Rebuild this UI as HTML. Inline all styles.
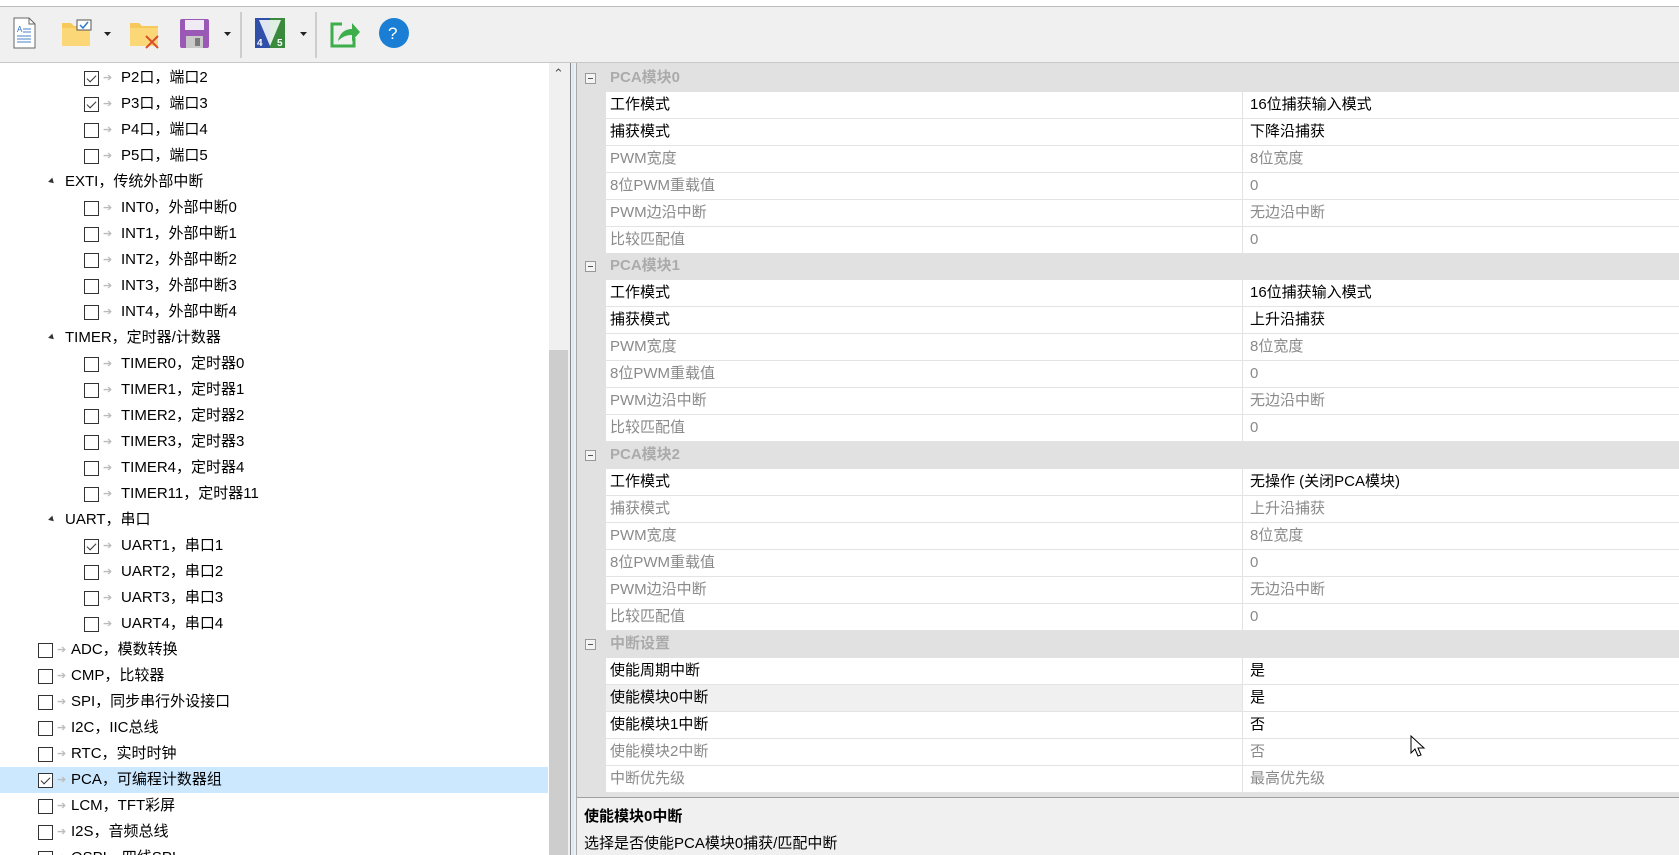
<!DOCTYPE html>
<html><head><meta charset="utf-8"><style>
*{margin:0;padding:0;box-sizing:border-box}
body{width:1679px;height:855px;overflow:hidden;background:#f0f0f0;font-family:"Liberation Sans","Noto Sans CJK SC",sans-serif;font-size:15px;color:#000;position:relative}
.a{position:absolute}
.tr{position:absolute;left:0;width:549px;height:26px;line-height:26px;white-space:nowrap}
.cb{position:absolute;top:6px;width:15px;height:15px;border:1px solid #333;background:#fff}
.cb.c::after{content:"";position:absolute;left:4px;top:1px;width:4px;height:8px;border:solid #333;border-width:0 1.5px 1.5px 0;transform:rotate(45deg)}
.ar{position:absolute;top:0;color:#bbb;font-size:11px}
.tri{position:absolute;top:10px;width:0;height:0;border-left:3px solid transparent;border-right:3px solid transparent;border-top:5px solid #333;transform:rotate(-45deg)}
.r{position:absolute;left:577px;width:1102px;height:27px;line-height:26px;white-space:nowrap}
.r .n{position:absolute;left:29px;width:636px;top:0;height:27px;background:#fff;border-bottom:1px solid #e3e3e3;padding-left:4px}
.r .v{position:absolute;left:665px;right:0;top:0;height:27px;background:#fff;border-bottom:1px solid #e3e3e3;border-left:1px solid #e3e3e3;padding-left:7px}
.r.g .n,.r.g .v{color:#8a8a8a}
.r.h{background:#e1e1e1;color:#ababab;font-weight:bold}
.r.h span{position:absolute;left:33px}
.r.h .bx{position:absolute;left:8px;top:8px;width:11px;height:11px;border:1px solid #999;background:#f4f4f4}
.r.h .bx::after{content:"";position:absolute;left:2px;top:4px;width:5px;height:1px;background:#555}
.r.s .n{background:#f0f0f0}
</style></head><body>
<div class="a" style="left:0;top:0;width:1679px;height:7px;background:#fff;border-bottom:1px solid #bbb"></div>
<div class="a" style="left:0;top:62px;width:1679px;height:1px;background:#c8c8c8"></div>
<!-- toolbar -->
<svg class="a" style="left:0;top:8px" width="440" height="54">
 <path d="M14 10h15l6 6v24H14z" fill="#fff" stroke="#666"/><path d="M29 10v6h6" fill="none" stroke="#666"/>
 <text x="17" y="24" font-size="8" fill="#2a6ec8" font-family="Liberation Sans">A</text>
 <path d="M23 21h8M23 24h8M17 28h14M17 31h14M17 34h14" stroke="#4a7fc8"/>
 <path d="M62 15h9l3 3h16v20H62z" fill="#f6c95a"/><path d="M62 20h28v18H62z" fill="#fbd777"/>
 <rect x="77" y="12" width="14" height="10" fill="#fff" stroke="#555"/><path d="M80 17l3 3 5-6" stroke="#2a7ad0" fill="none" stroke-width="1.5"/>
 <path d="M104 24h7l-3.5 4z" fill="#222"/>
 <path d="M130 15h9l3 3h16v20h-28z" fill="#f6c95a"/><path d="M130 20h28v18h-28z" fill="#fbd777"/>
 <path d="M146 28l12 12M158 28l-12 12" stroke="#d9512c" stroke-width="2"/>
 <rect x="180" y="11" width="29" height="29" rx="2" fill="#9b59b6"/><rect x="185" y="12" width="19" height="10" fill="#f0eaf4"/><rect x="186" y="28" width="17" height="12" fill="#c9c9c9"/><rect x="195" y="30" width="5" height="8" fill="#7a7a7a"/>
 <path d="M224 24h7l-3.5 4z" fill="#222"/>
 <path d="M241 4v46M316 4v46" stroke="#aaa"/>
 <rect x="255" y="10" width="30" height="30" fill="#2f4fa8"/><path d="M270 10h15v30h-15z" fill="#3a8a3e"/><path d="M259 12l11 26 11-26" fill="#fff" opacity=".85"/>
 <text x="257" y="38" font-size="10" fill="#fff" font-weight="bold" font-family="Liberation Sans">4</text><text x="277" y="38" font-size="10" fill="#fff" font-weight="bold" font-family="Liberation Sans">5</text>
 <path d="M300 24h7l-3.5 4z" fill="#222"/>
 <path d="M342 16h-10v22h22v-8" fill="none" stroke="#3cae4a" stroke-width="3"/><path d="M338 33c2-9 8-12 14-12v-6l8 9-8 9v-6c-6 0-10 2-14 6z" fill="#3cae4a"/>
 <circle cx="394" cy="25" r="15" fill="#1a7fd4"/><text x="388" y="31" font-size="17" fill="#fff" font-family="Liberation Sans">?</text>
</svg>
<!-- left tree -->
<div class="a" style="left:0;top:63px;width:549px;height:792px;background:#fff;overflow:hidden">
</div>
<div class="a" style="left:0;top:0;width:549px;height:855px;overflow:hidden">
<div class="tr" style="top:65px"><div class="cb c" style="left:84px"></div><span class="ar" style="left:103px">➔</span><span style="position:absolute;left:121px">P2口，端口2</span></div>
<div class="tr" style="top:91px"><div class="cb c" style="left:84px"></div><span class="ar" style="left:103px">➔</span><span style="position:absolute;left:121px">P3口，端口3</span></div>
<div class="tr" style="top:117px"><div class="cb" style="left:84px"></div><span class="ar" style="left:103px">➔</span><span style="position:absolute;left:121px">P4口，端口4</span></div>
<div class="tr" style="top:143px"><div class="cb" style="left:84px"></div><span class="ar" style="left:103px">➔</span><span style="position:absolute;left:121px">P5口，端口5</span></div>
<div class="tr" style="top:169px"><div class="tri" style="left:49px"></div><span style="position:absolute;left:65px">EXTI，传统外部中断</span></div>
<div class="tr" style="top:195px"><div class="cb" style="left:84px"></div><span class="ar" style="left:103px">➔</span><span style="position:absolute;left:121px">INT0，外部中断0</span></div>
<div class="tr" style="top:221px"><div class="cb" style="left:84px"></div><span class="ar" style="left:103px">➔</span><span style="position:absolute;left:121px">INT1，外部中断1</span></div>
<div class="tr" style="top:247px"><div class="cb" style="left:84px"></div><span class="ar" style="left:103px">➔</span><span style="position:absolute;left:121px">INT2，外部中断2</span></div>
<div class="tr" style="top:273px"><div class="cb" style="left:84px"></div><span class="ar" style="left:103px">➔</span><span style="position:absolute;left:121px">INT3，外部中断3</span></div>
<div class="tr" style="top:299px"><div class="cb" style="left:84px"></div><span class="ar" style="left:103px">➔</span><span style="position:absolute;left:121px">INT4，外部中断4</span></div>
<div class="tr" style="top:325px"><div class="tri" style="left:49px"></div><span style="position:absolute;left:65px">TIMER，定时器/计数器</span></div>
<div class="tr" style="top:351px"><div class="cb" style="left:84px"></div><span class="ar" style="left:103px">➔</span><span style="position:absolute;left:121px">TIMER0，定时器0</span></div>
<div class="tr" style="top:377px"><div class="cb" style="left:84px"></div><span class="ar" style="left:103px">➔</span><span style="position:absolute;left:121px">TIMER1，定时器1</span></div>
<div class="tr" style="top:403px"><div class="cb" style="left:84px"></div><span class="ar" style="left:103px">➔</span><span style="position:absolute;left:121px">TIMER2，定时器2</span></div>
<div class="tr" style="top:429px"><div class="cb" style="left:84px"></div><span class="ar" style="left:103px">➔</span><span style="position:absolute;left:121px">TIMER3，定时器3</span></div>
<div class="tr" style="top:455px"><div class="cb" style="left:84px"></div><span class="ar" style="left:103px">➔</span><span style="position:absolute;left:121px">TIMER4，定时器4</span></div>
<div class="tr" style="top:481px"><div class="cb" style="left:84px"></div><span class="ar" style="left:103px">➔</span><span style="position:absolute;left:121px">TIMER11，定时器11</span></div>
<div class="tr" style="top:507px"><div class="tri" style="left:49px"></div><span style="position:absolute;left:65px">UART，串口</span></div>
<div class="tr" style="top:533px"><div class="cb c" style="left:84px"></div><span class="ar" style="left:103px">➔</span><span style="position:absolute;left:121px">UART1，串口1</span></div>
<div class="tr" style="top:559px"><div class="cb" style="left:84px"></div><span class="ar" style="left:103px">➔</span><span style="position:absolute;left:121px">UART2，串口2</span></div>
<div class="tr" style="top:585px"><div class="cb" style="left:84px"></div><span class="ar" style="left:103px">➔</span><span style="position:absolute;left:121px">UART3，串口3</span></div>
<div class="tr" style="top:611px"><div class="cb" style="left:84px"></div><span class="ar" style="left:103px">➔</span><span style="position:absolute;left:121px">UART4，串口4</span></div>
<div class="tr" style="top:637px"><div class="cb" style="left:38px"></div><span class="ar" style="left:57px">➔</span><span style="position:absolute;left:71px">ADC，模数转换</span></div>
<div class="tr" style="top:663px"><div class="cb" style="left:38px"></div><span class="ar" style="left:57px">➔</span><span style="position:absolute;left:71px">CMP，比较器</span></div>
<div class="tr" style="top:689px"><div class="cb" style="left:38px"></div><span class="ar" style="left:57px">➔</span><span style="position:absolute;left:71px">SPI，同步串行外设接口</span></div>
<div class="tr" style="top:715px"><div class="cb" style="left:38px"></div><span class="ar" style="left:57px">➔</span><span style="position:absolute;left:71px">I2C，IIC总线</span></div>
<div class="tr" style="top:741px"><div class="cb" style="left:38px"></div><span class="ar" style="left:57px">➔</span><span style="position:absolute;left:71px">RTC，实时时钟</span></div>
<div class="tr" style="top:767px;background:#cce8ff;width:548px"><div class="cb c" style="left:38px"></div><span class="ar" style="left:57px">➔</span><span style="position:absolute;left:71px">PCA，可编程计数器组</span></div>
<div class="tr" style="top:793px"><div class="cb" style="left:38px"></div><span class="ar" style="left:57px">➔</span><span style="position:absolute;left:71px">LCM，TFT彩屏</span></div>
<div class="tr" style="top:819px"><div class="cb" style="left:38px"></div><span class="ar" style="left:57px">➔</span><span style="position:absolute;left:71px">I2S，音频总线</span></div>
<div class="tr" style="top:845px"><div class="cb" style="left:38px"></div><span class="ar" style="left:57px">➔</span><span style="position:absolute;left:71px">QSPI，四线SPI</span></div>
</div>
<!-- scrollbar -->
<div class="a" style="left:549px;top:63px;width:19px;height:792px;background:#f0f0f0"></div>
<div class="a" style="left:553px;top:66px;font-size:13px;color:#555">⌃</div>
<div class="a" style="left:549px;top:350px;width:19px;height:505px;background:#cdcdcd"></div>
<!-- splitter -->
<div class="a" style="left:568px;top:63px;width:9px;height:792px;background:#f0f0f0"></div>
<div class="a" style="left:570px;top:63px;width:1px;height:792px;background:#888"></div>
<div class="a" style="left:572px;top:63px;width:2px;height:792px;background:#dbe8f5"></div>
<div class="a" style="left:576px;top:63px;width:1px;height:792px;background:#aaa"></div>
<!-- grid -->
<div class="a" style="left:577px;top:63px;width:1102px;height:734px;background:#e1e1e1"></div>
<div class="r h" style="top:65px"><div class="bx"></div><span>PCA模块0</span></div>
<div class="r" style="top:92px"><div class="n">工作模式</div><div class="v">16位捕获输入模式</div></div>
<div class="r" style="top:119px"><div class="n">捕获模式</div><div class="v">下降沿捕获</div></div>
<div class="r g" style="top:146px"><div class="n">PWM宽度</div><div class="v">8位宽度</div></div>
<div class="r g" style="top:173px"><div class="n">8位PWM重载值</div><div class="v">0</div></div>
<div class="r g" style="top:200px"><div class="n">PWM边沿中断</div><div class="v">无边沿中断</div></div>
<div class="r g" style="top:227px"><div class="n">比较匹配值</div><div class="v">0</div></div>
<div class="r h" style="top:253px"><div class="bx"></div><span>PCA模块1</span></div>
<div class="r" style="top:280px"><div class="n">工作模式</div><div class="v">16位捕获输入模式</div></div>
<div class="r" style="top:307px"><div class="n">捕获模式</div><div class="v">上升沿捕获</div></div>
<div class="r g" style="top:334px"><div class="n">PWM宽度</div><div class="v">8位宽度</div></div>
<div class="r g" style="top:361px"><div class="n">8位PWM重载值</div><div class="v">0</div></div>
<div class="r g" style="top:388px"><div class="n">PWM边沿中断</div><div class="v">无边沿中断</div></div>
<div class="r g" style="top:415px"><div class="n">比较匹配值</div><div class="v">0</div></div>
<div class="r h" style="top:442px"><div class="bx"></div><span>PCA模块2</span></div>
<div class="r" style="top:469px"><div class="n">工作模式</div><div class="v">无操作 (关闭PCA模块)</div></div>
<div class="r g" style="top:496px"><div class="n">捕获模式</div><div class="v">上升沿捕获</div></div>
<div class="r g" style="top:523px"><div class="n">PWM宽度</div><div class="v">8位宽度</div></div>
<div class="r g" style="top:550px"><div class="n">8位PWM重载值</div><div class="v">0</div></div>
<div class="r g" style="top:577px"><div class="n">PWM边沿中断</div><div class="v">无边沿中断</div></div>
<div class="r g" style="top:604px"><div class="n">比较匹配值</div><div class="v">0</div></div>
<div class="r h" style="top:631px"><div class="bx"></div><span>中断设置</span></div>
<div class="r" style="top:658px"><div class="n">使能周期中断</div><div class="v">是</div></div>
<div class="r s" style="top:685px"><div class="n">使能模块0中断</div><div class="v">是</div></div>
<div class="r" style="top:712px"><div class="n">使能模块1中断</div><div class="v">否</div></div>
<div class="r g" style="top:739px"><div class="n">使能模块2中断</div><div class="v">否</div></div>
<div class="r g" style="top:766px"><div class="n">中断优先级</div><div class="v">最高优先级</div></div>
<!-- description -->
<div class="a" style="left:577px;top:797px;width:1102px;height:58px;background:#f0f0f0;border-top:1px solid #a0a0a0"></div>
<div class="a" style="left:584px;top:805px;font-weight:bold;font-size:15px">使能模块0中断</div>
<div class="a" style="left:584px;top:832px;font-size:15px">选择是否使能PCA模块0捕获/匹配中断</div>
<!-- cursor -->
<svg class="a" style="left:1410px;top:735px" width="16" height="24"><path d="M1 1v17l4-4 3 7 3-1-3-7h6z" fill="#fff" stroke="#000"/></svg>
</body></html>
